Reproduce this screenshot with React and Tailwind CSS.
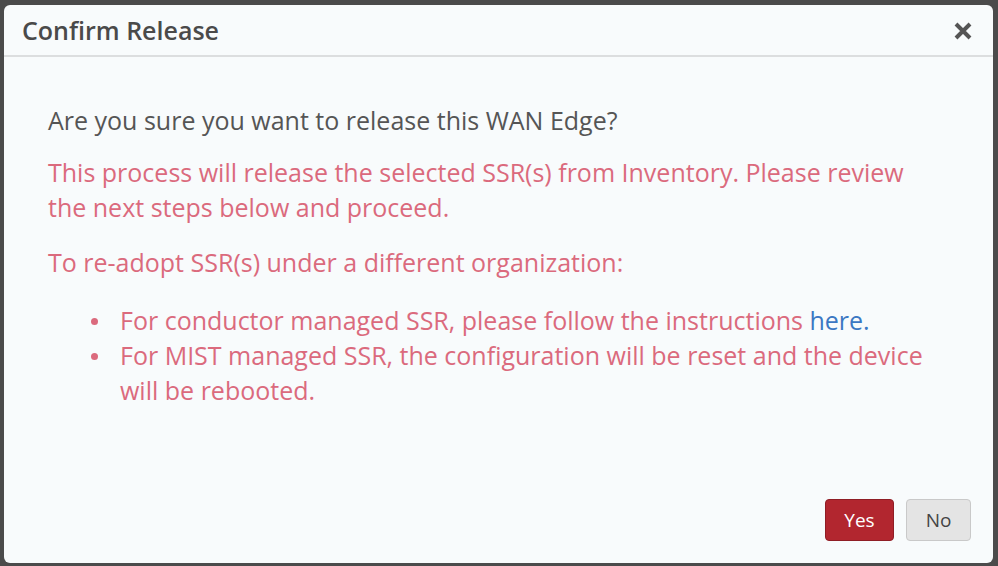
const BULLETS = [
  <>
    For conductor managed SSR, please follow the instructions{' '}
    <span className="text-[#3b78c3]">here.</span>
  </>,
  <>For MIST managed SSR, the configuration will be reset and the device will be rebooted.</>,
];

export default function App() {
  return (
    <div
      className="w-[998px] h-[566px] bg-[#4b4b4b] pt-[5px] pl-[4px] overflow-hidden"
      style={{ fontFamily: '"Open Sans", "Liberation Sans", sans-serif' }}
    >
      <div className="w-[989px] h-[558px] bg-[#f8fbfc] rounded-[6px] flex flex-col">
        {/* Header */}
        <div className="h-[52px] flex items-center justify-between pl-[18px] pr-[20px] pt-[2px] border-b-2 border-[#dcdedf]">
          <h2 className="text-[25px] font-semibold text-[#4a4a4a]">Confirm Release</h2>
          <svg className="w-[20px] h-[20px] text-[#555]" viewBox="0 0 20 20" fill="none" stroke="currentColor">
            <path d="M3 3l14 14M17 3L3 17" strokeWidth={4} strokeLinecap="butt" />
          </svg>
        </div>

        {/* Body */}
        <div className="flex-1 pl-[44px] pr-[60px] pt-[46px] text-[25px] leading-[35px]">
          <p className="text-[#555] mb-[17px]">Are you sure you want to release this WAN Edge?</p>
          <p className="text-[#db6a7d] mb-[20px]">
            This process will release the selected SSR(s) from Inventory. Please review the next steps below and proceed.
          </p>
          <p className="text-[#db6a7d] mb-[23px]">To re-adopt SSR(s) under a different organization:</p>
          <ul className="text-[#db6a7d] pl-[43px]">
            {BULLETS.map((item, i) => (
              <li key={i} className="flex">
                <span className="w-[29px] shrink-0 flex items-start pt-[15px]">
                  <span className="w-[7px] h-[7px] rounded-full bg-[#db6a7d]" />
                </span>
                <span>{item}</span>
              </li>
            ))}
          </ul>
        </div>

        {/* Footer */}
        <div className="flex justify-end gap-[12px] pr-[22px] pb-[22px]">
          <button className="w-[69px] h-[42px] bg-[#b2262f] border border-[#8f1d25] rounded-[4px] text-white text-[19px]">
            Yes
          </button>
          <button className="w-[65px] h-[42px] bg-[#e4e4e4] border border-[#c9c9c9] rounded-[4px] text-[#444] text-[19px]">
            No
          </button>
        </div>
      </div>
    </div>
  );
}
